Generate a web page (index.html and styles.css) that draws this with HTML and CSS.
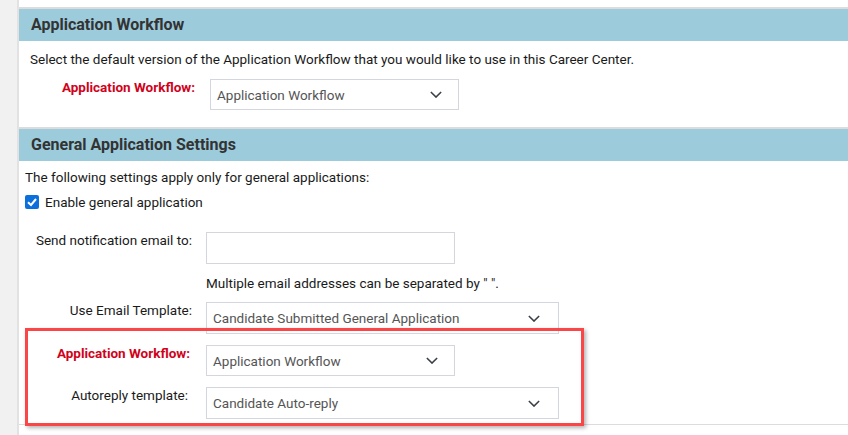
FILE: index.html
```html
<!DOCTYPE html>
<html>
<head>
<meta charset="utf-8">
<link rel="stylesheet" href="styles.css">
</head>
<body>
<div class="page">
  <div class="rail"></div>
  <div class="main">
    <div class="topgap"></div>
    <section class="panel">
      <h2 class="panel-head">Application Workflow</h2>
      <div class="panel-body p1">
        <p class="desc">Select the default version of the Application Workflow that you would like to use in this Career Center.</p>
        <div class="row row1">
          <label class="lbl req w1">Application Workflow:</label>
          <div class="select s-narrow">
            <span>Application Workflow</span>
            <svg class="chev" viewBox="0 0 14 8"><polyline points="1,1 7,7 13,1"/></svg>
          </div>
        </div>
      </div>
    </section>
    <section class="panel">
      <h2 class="panel-head">General Application Settings</h2>
      <div class="panel-body p2">
        <p class="desc">The following settings apply only for general applications:</p>
        <div class="check-row">
          <span class="check"><svg viewBox="0 0 14 14"><polyline points="3,7.2 6,10 11,4"/></svg></span>
          <span>Enable general application</span>
        </div>
        <div class="row r-email">
          <label class="lbl w2">Send notification email to:</label>
          <div class="input"></div>
        </div>
        <p class="help">Multiple email addresses can be separated by " ".</p>
        <div class="row r-tpl">
          <label class="lbl w2">Use Email Template:</label>
          <div class="select s-wide">
            <span>Candidate Submitted General Application</span>
            <svg class="chev" viewBox="0 0 14 8"><polyline points="1,1 7,7 13,1"/></svg>
          </div>
        </div>
        <div class="row r-wf">
          <label class="lbl req w3">Application Workflow:</label>
          <div class="select s-narrow">
            <span>Application Workflow</span>
            <svg class="chev" viewBox="0 0 14 8"><polyline points="1,1 7,7 13,1"/></svg>
          </div>
        </div>
        <div class="row r-auto">
          <label class="lbl w4">Autoreply template:</label>
          <div class="select s-wide">
            <span>Candidate Auto-reply</span>
            <svg class="chev" viewBox="0 0 14 8"><polyline points="1,1 7,7 13,1"/></svg>
          </div>
        </div>
      </div>
    </section>
  </div>
  <div class="highlight"></div>
</div>
</body>
</html>
```
FILE: styles.css
```css
* { box-sizing: border-box; }
html, body { margin: 0; padding: 0; background: #fff; }
body {
  font-family: Roboto, "Liberation Sans", Arial, sans-serif;
  font-size: 13.5px;
  color: #1a1a1a;
  width: 848px;
  height: 435px;
  overflow: hidden;
}
.page {
  position: relative;
  display: flex;
  height: 435px;
}
.rail {
  width: 19px;
  flex: none;
  background: #f1f1f1;
  border-right: 2px solid #e2e2e2;
}
.main {
  flex: 1;
  display: flex;
  flex-direction: column;
}
.topgap { height: 7px; }
.panel {
  border-top: 2px solid #dcdcdc;
}
.panel-head {
  margin: 0;
  height: 32px;
  background: #9ccbdc;
  color: #333;
  font-size: 16px;
  font-weight: 700;
  line-height: 32px;
  padding-left: 12px;
}
.p1 { padding: 9px 0 17px 11px; }
.p2 { padding: 7px 0 5px 6px; border-bottom: 1px solid #dcdcdc; }
.desc { margin: 0; line-height: 18px; }
.row {
  display: flex;
  align-items: flex-start;
  margin-left: -6px;
}
.p1 .row1 { margin-top: 11px; margin-left: -11px; }
.lbl {
  flex: none;
  text-align: right;
  line-height: 18px;
  margin-top: -1px;
  color: #1a1a1a;
}
.lbl.req { color: #d0021b; font-weight: 700; }
.w1 { width: 176px; margin-right: 15px; }
.select {
  border: 1px solid #d3d6dc;
  background: #fff;
  display: flex;
  align-items: center;
  justify-content: space-between;
  padding: 0 16px 0 6px;
  color: #555;
  line-height: 18px;
}
.s-narrow { width: 249px; height: 31px; }
.s-wide { width: 353px; height: 32px; padding-right: 18px; }
.chev { width: 12px; height: 7px; fill: none; stroke: #3a3f45; stroke-width: 1.8; }
.check-row {
  margin-top: 7px;
  display: flex;
  align-items: center;
  gap: 6px;
  line-height: 18px;
}
.check {
  width: 14px; height: 14px;
  border-radius: 2px;
  background: #0b6fdc;
  display: inline-flex;
}
.check svg { width: 14px; height: 14px; fill: none; stroke: #fff; stroke-width: 2; }
.r-email { margin-top: 21px; }
.w2 { width: 173px; margin-right: 14px; }
.w3 { width: 171px; margin-right: 16px; }
.w4 { width: 169px; margin-right: 18px; }
.input {
  width: 249px;
  height: 32px;
  border: 1px solid #d3d6dc;
}
.help { margin: 10px 0 0 181px; line-height: 18px; }
.r-tpl { margin-top: 10px; }
.r-wf { margin-top: 11px; }
.r-auto { margin-top: 11px; }
.highlight {
  position: absolute;
  left: 25px;
  top: 328px;
  width: 559px;
  height: 98px;
  border: 3px solid #fa4647;
  box-shadow: 2px 2px 4px rgba(0,0,0,0.3);
  pointer-events: none;
}
```
